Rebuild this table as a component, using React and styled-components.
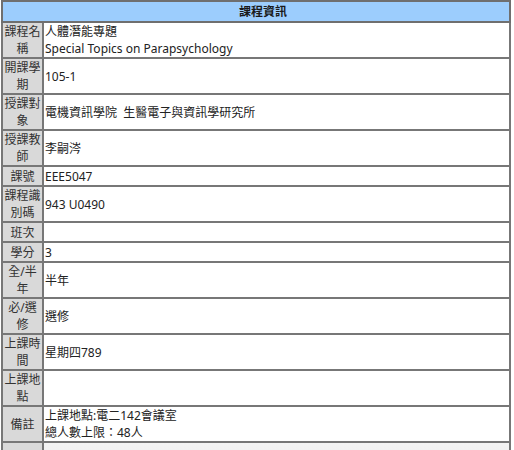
import React from 'react';
import styled, { createGlobalStyle } from 'styled-components';

const GlobalStyle = createGlobalStyle`
  body {
    margin: 0;
    background: #ffffff;
    font-family: "Noto Sans", "Noto Sans CJK TC", sans-serif;
  }
`;

const Table = styled.table`
  margin-left: 1px;
  width: 510px;
  border-collapse: collapse;
  border: 2px solid #6f6f6f;
  font-size: 12px;
  line-height: 17px;
  color: #222;
`;

const HeadCell = styled.th`
  background: #9ccdfd;
  border: 2px solid #6f6f6f;
  height: 19px;
  padding: 0 0 0 14px;
  font-weight: bold;
  font-size: 12px;
  text-align: center;
  color: #1a1a1a;
`;

const Label = styled.td`
  width: 37px;
  background: #d9d9d9;
  border: 2px solid #777;
  padding: 0 1px;
  text-align: center;
  vertical-align: middle;
  color: #333;
`;

const Value = styled.td`
  background: ${(p) => (p.$fade ? 'linear-gradient(#f4f4f4, #ececec)' : '#fff')};
  border: 2px solid #777;
  padding: 0 1px;
  vertical-align: middle;
  height: ${(p) => p.$h}px;
`;

const rows = [
  { label: '課程名稱', value: ['人體潛能專題', 'Special Topics on Parapsychology'], h: 34 },
  { label: '開課學期', value: ['105-1'], h: 34 },
  { label: '授課對象', value: ['電機資訊學院  生醫電子與資訊學研究所'], h: 34 },
  { label: '授課教師', value: ['李嗣涔'], h: 34 },
  { label: '課號', value: ['EEE5047'], h: 18 },
  { label: '課程識別碼', value: ['943 U0490'], h: 34 },
  { label: '班次', value: [''], h: 18 },
  { label: '學分', value: ['3'], h: 18 },
  { label: '全/半年', value: ['半年'], h: 34 },
  { label: '必/選修', value: ['選修'], h: 34 },
  { label: '上課時間', value: ['星期四789'], h: 34 },
  { label: '上課地點', value: [''], h: 34 },
  { label: '備註', value: ['上課地點:電二142會議室', '總人數上限：48人'], h: 34 },
];

export default function App() {
  return (
    <>
      <GlobalStyle />
      <Table>
        <thead>
          <tr>
            <HeadCell colSpan={2}>課程資訊</HeadCell>
          </tr>
        </thead>
        <tbody>
          {rows.map((r) => (
            <tr key={r.label}>
              <Label>{r.label}</Label>
              <Value $h={r.h}>
                {r.value.map((line, i) => (
                  <div key={i} style={{ whiteSpace: 'pre' }}>{line}</div>
                ))}
              </Value>
            </tr>
          ))}
          <tr>
            <Label>&nbsp;</Label>
            <Value $h={34} $fade />
          </tr>
        </tbody>
      </Table>
    </>
  );
}
